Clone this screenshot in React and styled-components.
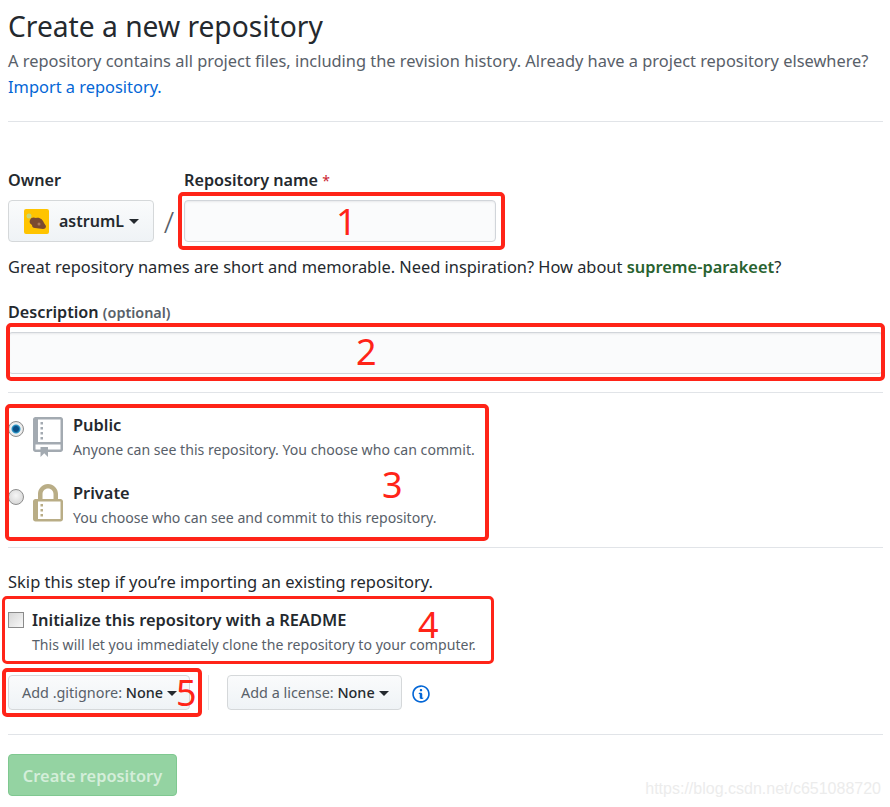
import React from "react";
import styled, { createGlobalStyle } from "styled-components";

const Global = createGlobalStyle`
  html, body { margin: 0; padding: 0; background: #fff; }
  body { font-family: "Noto Sans", "Open Sans", "Liberation Sans", sans-serif; color: #24292e; }
`;

const Page = styled.div`
  position: relative;
  width: 890px;
  height: 807px;
  overflow: hidden;
  padding: 0 7px 0 8px;
  box-sizing: border-box;
`;
const Title = styled.h1`
  margin: 0;
  padding-top: 6px;
  font-size: 28.2px;
  line-height: 40px;
  font-weight: 400;
`;
const Lead = styled.p`
  margin: 2px 0 0;
  font-size: 16.4px;
  line-height: 26px;
  color: #586069;
`;
const LinkText = styled.a`
  color: #0366d6;
  text-decoration: none;
`;
const Rule = styled.hr`
  border: 0;
  height: 1px;
  margin: ${(p) => p.$m};
  background: #e1e4e8;
`;
const OwnerRow = styled.div`
  display: flex;
  align-items: flex-end;
  margin-top: 47px;
`;
const Field = styled.div`
  display: flex;
  flex-direction: column;
`;
const Label = styled.label`
  display: block;
  font-size: 16.2px;
  font-weight: 600;
  line-height: 22px;
  margin-bottom: 9px;
`;
const Star = styled.span`
  color: #cb2431;
  font-size: 14px;
  line-height: 0;
  font-weight: 400;
`;
const OwnerButton = styled.button`
  display: flex;
  align-items: center;
  width: 146px;
  height: 42px;
  padding: 0 0 0 15px;
  border: 1px solid #d5d8da;
  border-radius: 4px;
  background: linear-gradient(#fafbfc, #eff3f6);
  font: 600 16px "Noto Sans", sans-serif;
  color: #24292e;
`;
const Avatar = styled.svg`
  width: 25px;
  height: 25px;
  margin-right: 10px;
  border-radius: 2px;
`;
const Caret = styled.span`
  display: inline-block;
  width: 0;
  height: 0;
  margin-left: ${(p) => p.$ml || "5px"};
  vertical-align: 2px;
  border-style: solid;
  border-width: 5px 5px 0;
  border-color: #24292e transparent transparent;
`;
const Slash = styled.span`
  width: 30px;
  height: 42px;
  text-align: center;
  font-size: 30px;
  font-weight: 300;
  line-height: 44px;
  color: #586069;
`;
const TextInput = styled.input`
  display: block;
  box-sizing: border-box;
  width: ${(p) => p.$w};
  height: ${(p) => p.$h};
  padding: 0 9px;
  border: 1px solid #d1d5da;
  border-radius: 4px;
  background: #fafbfc;
  box-shadow: inset 0 1px 2px rgba(27, 31, 35, 0.075);
  outline: none;
`;
const Note = styled.p`
  margin: ${(p) => p.$m};
  font-size: ${(p) => p.$fs || "16.4px"};
  line-height: 24px;
  color: #24292e;
`;
const Suggestion = styled.strong`
  color: #28622f;
  font-weight: 600;
`;
const SmallNote = styled.span`
  color: #586069;
  font-size: 14.4px;
  line-height: 0;
  font-weight: 600;
`;
const ChoiceGroup = styled.div`
  padding-top: 20px;
`;
const Choice = styled.div`
  display: grid;
  grid-template-columns: 25px 40px 1fr;
  height: ${(p) => p.$h};
  align-items: start;
`;
const Radio = styled.input.attrs({ type: "radio", readOnly: true })`
  appearance: none;
  box-sizing: border-box;
  width: 16px;
  height: 16px;
  margin: 8px 0 0;
  border-radius: 50%;
  border: 1px solid #8d8d8d;
  background: ${(p) =>
    p.checked
      ? "radial-gradient(circle, #0a4f86 0 2.5px, #2f9ccc 4px, #f2f2f2 5px, #d0d0d0 100%)"
      : "radial-gradient(circle at 50% 40%, #f6f6f6, #cfcfcf)"};
`;
const RepoIcon = styled.svg`
  display: block;
  width: 30px;
  height: 40px;
  margin-top: ${(p) => p.$mt};
  fill: ${(p) => p.$c};
`;
const ChoiceTitle = styled.div`
  font-size: 16.4px;
  font-weight: 600;
  line-height: 24px;
`;
const ChoiceDesc = styled.div`
  margin-top: 1px;
  font-size: 14.1px;
  line-height: 24px;
  color: #586069;
`;
const CheckRow = styled.div`
  display: grid;
  grid-template-columns: 24px 1fr;
  margin-top: 14px;
`;
const Check = styled.input.attrs({ type: "checkbox", readOnly: true })`
  appearance: none;
  box-sizing: border-box;
  width: 16px;
  height: 16px;
  margin: 4px 0 0;
  border: 1px solid #8a8a8a;
  background: linear-gradient(135deg, #d6d6d6, #f8f8f8);
`;
const SelectRow = styled.div`
  display: flex;
  align-items: center;
  margin-top: 18px;
`;
const SelectButton = styled.button`
  box-sizing: border-box;
  width: ${(p) => p.$w};
  height: 35px;
  padding: 0 0 0 13px;
  border: 1px solid #d5d8da;
  border-radius: 4px;
  background: linear-gradient(#fafbfc, #eff3f6);
  text-align: left;
  font: 400 14.4px "Noto Sans", sans-serif;
  color: #586069;
  white-space: nowrap;
`;
const SelectValue = styled.span`
  color: #24292e;
  font-weight: 500;
`;
const VDivider = styled.span`
  width: 1px;
  height: 35px;
  margin: 0 18px 0 18px;
  background: #e1e4e8;
`;
const InfoIcon = styled.svg`
  width: 18px;
  height: 20px;
  margin: 2px 0 0 10px;
  fill: #0366d6;
`;
const Submit = styled.button`
  display: block;
  width: 169px;
  height: 42px;
  padding: 0;
  border: 1px solid #7fc890;
  border-radius: 4px;
  background: #94d3a2;
  color: #d4eeda;
  font: 600 16.4px "Noto Sans", sans-serif;
`;
const Mark = styled.div`
  position: absolute;
  left: ${(p) => p.$x}px;
  top: ${(p) => p.$y}px;
  width: ${(p) => p.$w}px;
  height: ${(p) => p.$h}px;
  box-sizing: border-box;
  border: ${(p) => p.$b || 4}px solid #ff2418;
  border-radius: 5px;
  pointer-events: none;
`;
const Num = styled.span`
  position: absolute;
  left: ${(p) => p.$x}px;
  top: ${(p) => p.$y}px;
  font-size: 36px;
  line-height: 40px;
  color: #ff2418;
`;
const Watermark = styled.span`
  position: absolute;
  right: 9px;
  top: 780px;
  font-family: "Liberation Sans", sans-serif;
  font-size: 16px;
  line-height: 18px;
  color: #ececec;
`;

const BOOK = "M4 9H3V8h1v1zm0-3H3v1h1V6zm0-2H3v1h1V4zm0-2H3v1h1V2zm8-1v12c0 .55-.45 1-1 1H6v2l-1.5-1.5L3 16v-2H1c-.55 0-1-.45-1-1V1c0-.55.45-1 1-1h10c.55 0 1 .45 1 1zm-1 10H1v2h2v-1h3v1h5v-2zm0-10H2v9h9V1z";
const LOCK = "M4 13H3v-1h1v1zm8-6v7c0 .55-.45 1-1 1H1c-.55 0-1-.45-1-1V7c0-.55.45-1 1-1h1V4c0-2.2 1.8-4 4-4s4 1.8 4 4v2h1c.55 0 1 .45 1 1zM3.8 6h4.41V4c0-1.22-.98-2.2-2.2-2.2-1.22 0-2.2.98-2.2 2.2v2H3.8zM11 7H2v7h9V7zM4 8H3v1h1V8zm0 2H3v1h1v-1z";
const INFO = "M6.3 5.69a.942.942 0 0 1-.28-.7c0-.28.09-.52.28-.7.19-.18.42-.28.7-.28.28 0 .52.09.7.28.18.19.28.42.28.7 0 .28-.09.52-.28.7a1 1 0 0 1-.7.3c-.28 0-.52-.11-.7-.3zM8 7.99c-.02-.25-.11-.48-.31-.69-.2-.19-.42-.3-.69-.31H6c-.27.02-.48.13-.69.31-.2.2-.3.44-.31.69h1v3c.02.27.11.5.31.69.2.2.42.31.69.31h1c.27 0 .48-.11.69-.31.2-.19.3-.42.31-.69H8V7.98v.01zM7 2.3c-3.14 0-5.7 2.54-5.7 5.68 0 3.14 2.56 5.7 5.7 5.7s5.7-2.55 5.7-5.7c0-3.15-2.56-5.69-5.7-5.69v.01zM7 .98c3.86 0 7 3.14 7 7s-3.14 7-7 7-7-3.12-7-7 3.14-7 7-7z";

export default function App() {
  return (
    <>
      <Global />
      <Page>
        <Title>Create a new repository</Title>
        <Lead>
          A repository contains all project files, including the revision history. Already have a project repository elsewhere?
          <br />
          <LinkText href="#">Import a repository.</LinkText>
        </Lead>
        <Rule $m="21px 0 0" />
        <OwnerRow>
          <Field>
            <Label>Owner</Label>
            <OwnerButton>
              <Avatar viewBox="0 0 25 25">
                <rect width="25" height="25" fill="#ffc400" />
                <circle cx="5" cy="7" r="2.5" fill="#c9d77a" />
                <path d="M6 11c1-3 4-3 6-2 4-1 7 2 8 5l2 3c0 2-1 3-3 3l-8-1c-2 0-3-1-3-3-2-1-3-3-2-5z" fill="#7a4a30" />
                <circle cx="15" cy="15" r="1.5" fill="#a9785a" />
              </Avatar>
              astrumL
              <Caret />
            </OwnerButton>
          </Field>
          <Slash>/</Slash>
          <Field>
            <Label>
              Repository name <Star>*</Star>
            </Label>
            <TextInput $w="312px" $h="42px" />
          </Field>
        </OwnerRow>
        <Note $m="13px 0 22px">
          Great repository names are short and memorable. Need inspiration? How about <Suggestion>supreme-parakeet</Suggestion>?
        </Note>
        <Field>
          <Label>
            Description <SmallNote>(optional)</SmallNote>
          </Label>
          <TextInput $w="100%" $h="42px" />
        </Field>
        <Rule $m="18px 0 0" />
        <ChoiceGroup>
          <Choice $h="68px">
            <Radio checked />
            <RepoIcon viewBox="0 0 12 16" $c="#a3aab1" $mt="4px"><path d={BOOK} /></RepoIcon>
            <div>
              <ChoiceTitle>Public</ChoiceTitle>
              <ChoiceDesc>Anyone can see this repository. You choose who can commit.</ChoiceDesc>
            </div>
          </Choice>
          <Choice $h="66px">
            <Radio />
            <RepoIcon viewBox="0 0 12 16" $c="#b9ad86" $mt="3px"><path d={LOCK} /></RepoIcon>
            <div>
              <ChoiceTitle>Private</ChoiceTitle>
              <ChoiceDesc>You choose who can see and commit to this repository.</ChoiceDesc>
            </div>
          </Choice>
        </ChoiceGroup>
        <Rule $m="0" />
        <Note $m="22px 0 0" $fs="16.5px">Skip this step if you’re importing an existing repository.</Note>
        <CheckRow>
          <Check />
          <div>
            <ChoiceTitle>Initialize this repository with a README</ChoiceTitle>
            <ChoiceDesc>This will let you immediately clone the repository to your computer.</ChoiceDesc>
          </div>
        </CheckRow>
        <SelectRow>
          <SelectButton $w="182px">
            Add .gitignore: <SelectValue>None</SelectValue>
            <Caret $ml="4px" />
          </SelectButton>
          <VDivider />
          <SelectButton $w="175px">
            Add a license: <SelectValue>None</SelectValue>
            <Caret $ml="4px" />
          </SelectButton>
          <InfoIcon viewBox="0 0 14 16"><path d={INFO} /></InfoIcon>
        </SelectRow>
        <Rule $m="24px 0 19px" />
        <Submit>Create repository</Submit>

        <Mark $x={178} $y={192} $w={327} $h={58} />
        <Mark $x={6} $y={323} $w={879} $h={58} />
        <Mark $x={5} $y={404} $w={484} $h={137} />
        <Mark $x={2} $y={596} $w={492} $h={68} $b={3} />
        <Mark $x={2} $y={668} $w={200} $h={49} />
        <Num $x={336} $y={202}>1</Num>
        <Num $x={356} $y={332}>2</Num>
        <Num $x={382} $y={465}>3</Num>
        <Num $x={418} $y={605}>4</Num>
        <Num $x={176} $y={673}>5</Num>
        <Watermark>https://blog.csdn.net/c651088720</Watermark>
      </Page>
    </>
  );
}
